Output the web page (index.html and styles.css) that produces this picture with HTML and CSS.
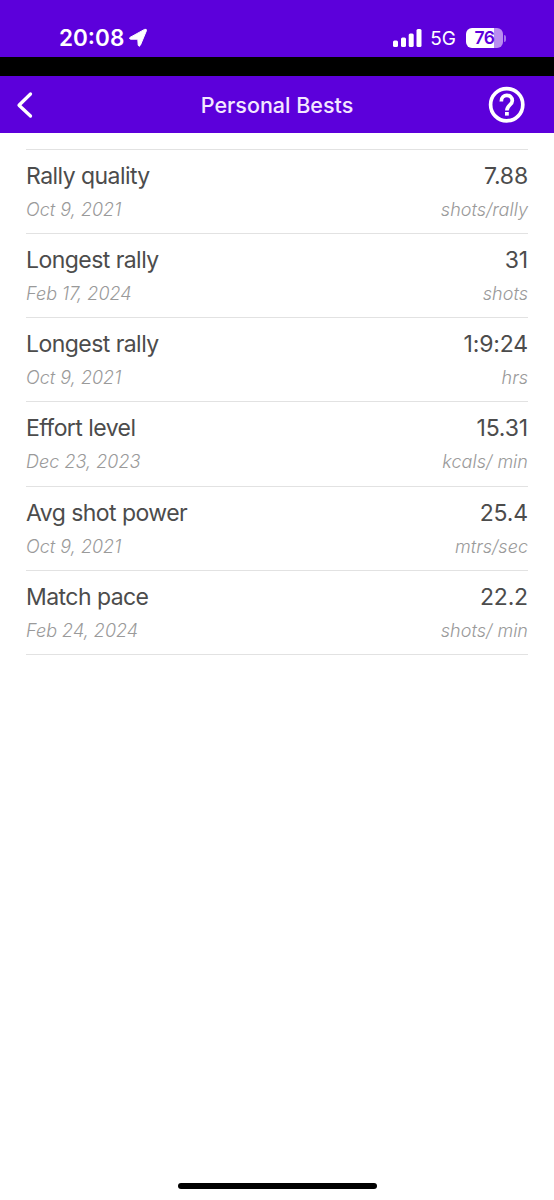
FILE: index.html
```
<!DOCTYPE html>
<html lang="en">
<head>
    <meta charset="UTF-8">
    <meta name="viewport" content="width=device-width, initial-scale=1.0">
    <title>Personal Bests</title>
    <link rel="stylesheet" href="styles.css">
</head>
<body>

<div class="status-bar">
    <div class="clock">
        <span class="time">20:08</span>
        <svg class="location" width="20" height="20" viewBox="0 0 20 20">
            <path d="M1 9.4 L15.6 1.4 Q18 0.6 17.3 3 L11.4 17.2 Q10 19.4 9.2 17.2 L8.8 11.2 L1.6 11.2 Q-0.4 10.5 1 9.4 Z" fill="#fff" stroke="#fff" stroke-width="1" stroke-linejoin="round"/>
        </svg>
    </div>
    <div class="indicators">
        <svg class="signal" width="29" height="19" viewBox="0 0 29 19">
            <g fill="#fff">
                <rect x="0" y="11.5" width="5" height="6.5" rx="1.5"/>
                <rect x="8" y="8.5" width="5" height="9.5" rx="1.5"/>
                <rect x="15.7" y="4.5" width="5" height="13.5" rx="1.5"/>
                <rect x="23.5" y="0" width="5" height="18" rx="1.5"/>
            </g>
        </svg>
        <span class="network">5G</span>
        <div class="battery">
            <span class="level">76</span>
        </div>
        <span class="battery-cap"></span>
    </div>
</div>

<div class="header">
    <svg class="back" width="38" height="28" viewBox="0 0 38 28">
        <path d="M14.5 3 L3 14.2 L14.5 25" fill="none" stroke="#fff" stroke-width="3.3" stroke-linecap="round" stroke-linejoin="round"/>
    </svg>
    <h1>Personal Bests</h1>
    <svg class="help" width="38" height="38" viewBox="0 0 38 38">
        <circle cx="18.7" cy="18.7" r="16.1" fill="none" stroke="#fff" stroke-width="3.7"/>
        <path d="M13.3 15.4 C13.3 7.4 24.3 7.6 24.3 14.8 C24.3 19 18.9 19 18.9 24.6" fill="none" stroke="#fff" stroke-width="3.7"/>
        <rect x="17" y="26" width="3.8" height="3.6" fill="#fff"/>
    </svg>
</div>

<div class="list">
    <div class="row">
        <div class="line"><span class="name">Rally quality</span><span class="value">7.88</span></div>
        <div class="line small"><span>Oct 9, 2021</span><span>shots/rally</span></div>
    </div>
    <div class="row">
        <div class="line"><span class="name">Longest rally</span><span class="value">31</span></div>
        <div class="line small"><span>Feb 17, 2024</span><span>shots</span></div>
    </div>
    <div class="row">
        <div class="line"><span class="name">Longest rally</span><span class="value">1:9:24</span></div>
        <div class="line small"><span>Oct 9, 2021</span><span>hrs</span></div>
    </div>
    <div class="row">
        <div class="line"><span class="name">Effort level</span><span class="value">15.31</span></div>
        <div class="line small"><span>Dec 23, 2023</span><span>kcals/ min</span></div>
    </div>
    <div class="row">
        <div class="line"><span class="name">Avg shot power</span><span class="value">25.4</span></div>
        <div class="line small"><span>Oct 9, 2021</span><span>mtrs/sec</span></div>
    </div>
    <div class="row">
        <div class="line"><span class="name">Match pace</span><span class="value">22.2</span></div>
        <div class="line small"><span>Feb 24, 2024</span><span>shots/ min</span></div>
    </div>
</div>

<div class="home-indicator"></div>

</body>
</html>
```
FILE: styles.css
```
* {
    box-sizing: border-box;
}

body {
    font-family: 'Inter', 'Liberation Sans', sans-serif;
    background-color: #fff;
    display: flex;
    flex-direction: column;
    height: 1200px;
    margin: 0;
}

.status-bar {
    display: flex;
    justify-content: space-between;
    height: 76px;
    padding: 0 48px 0 59px;
    background-color: #5c00db;
    border-bottom: 19px solid #000;
    color: #fff;
}

.clock {
    display: flex;
    align-items: center;
    height: 76px;
    gap: 5px;
}

.time {
    font-size: 22.5px;
    font-weight: 600;
    line-height: 30px;
}

.indicators {
    display: flex;
    align-items: center;
    height: 76px;
}

.network {
    margin-left: 8px;
    font-size: 19px;
}

.battery {
    width: 37px;
    height: 20px;
    margin-left: 10px;
    border-radius: 6px;
    background: linear-gradient(to right, #fff 28px, #b98cf0 28px);
    color: #5c00db;
    text-align: center;
}

.level {
    font-size: 17.5px;
    font-weight: 600;
    letter-spacing: -0.4px;
    line-height: 20px;
}

.battery-cap {
    width: 2px;
    height: 7px;
    margin-left: 1px;
    border-radius: 0 3px 3px 0;
    background-color: #a673ea;
}

.header {
    display: flex;
    justify-content: space-between;
    align-items: center;
    height: 57px;
    padding: 0 28px 0 16px;
    background-color: #5c00db;
}

h1 {
    margin: 0 0 0 12px;
    color: #f3e8ff;
    font-size: 21.5px;
    font-weight: 500;
}

.list {
    flex: 1;
    margin: 16px 26px 0;
}

.row {
    height: 84.17px;
    padding-top: 11px;
    border-top: 1px solid #e2e2e2;
}

.row:last-child {
    height: 85.17px;
    border-bottom: 1px solid #e2e2e2;
}

.line {
    display: flex;
    justify-content: space-between;
    height: 30px;
    color: #4c4c4c;
    font-size: 23px;
    line-height: 30px;
}

.name {
    letter-spacing: -0.55px;
}

.value {
    letter-spacing: -0.15px;
}

.small {
    height: 24px;
    margin-top: 7px;
    color: #9a9a9a;
    font-size: 18px;
    font-style: italic;
    font-weight: 300;
    letter-spacing: 0.03px;
    line-height: 24px;
}

.home-indicator {
    width: 199px;
    height: 6px;
    margin: 0 auto 11px;
    border-radius: 3px;
    background-color: #000;
}
```
